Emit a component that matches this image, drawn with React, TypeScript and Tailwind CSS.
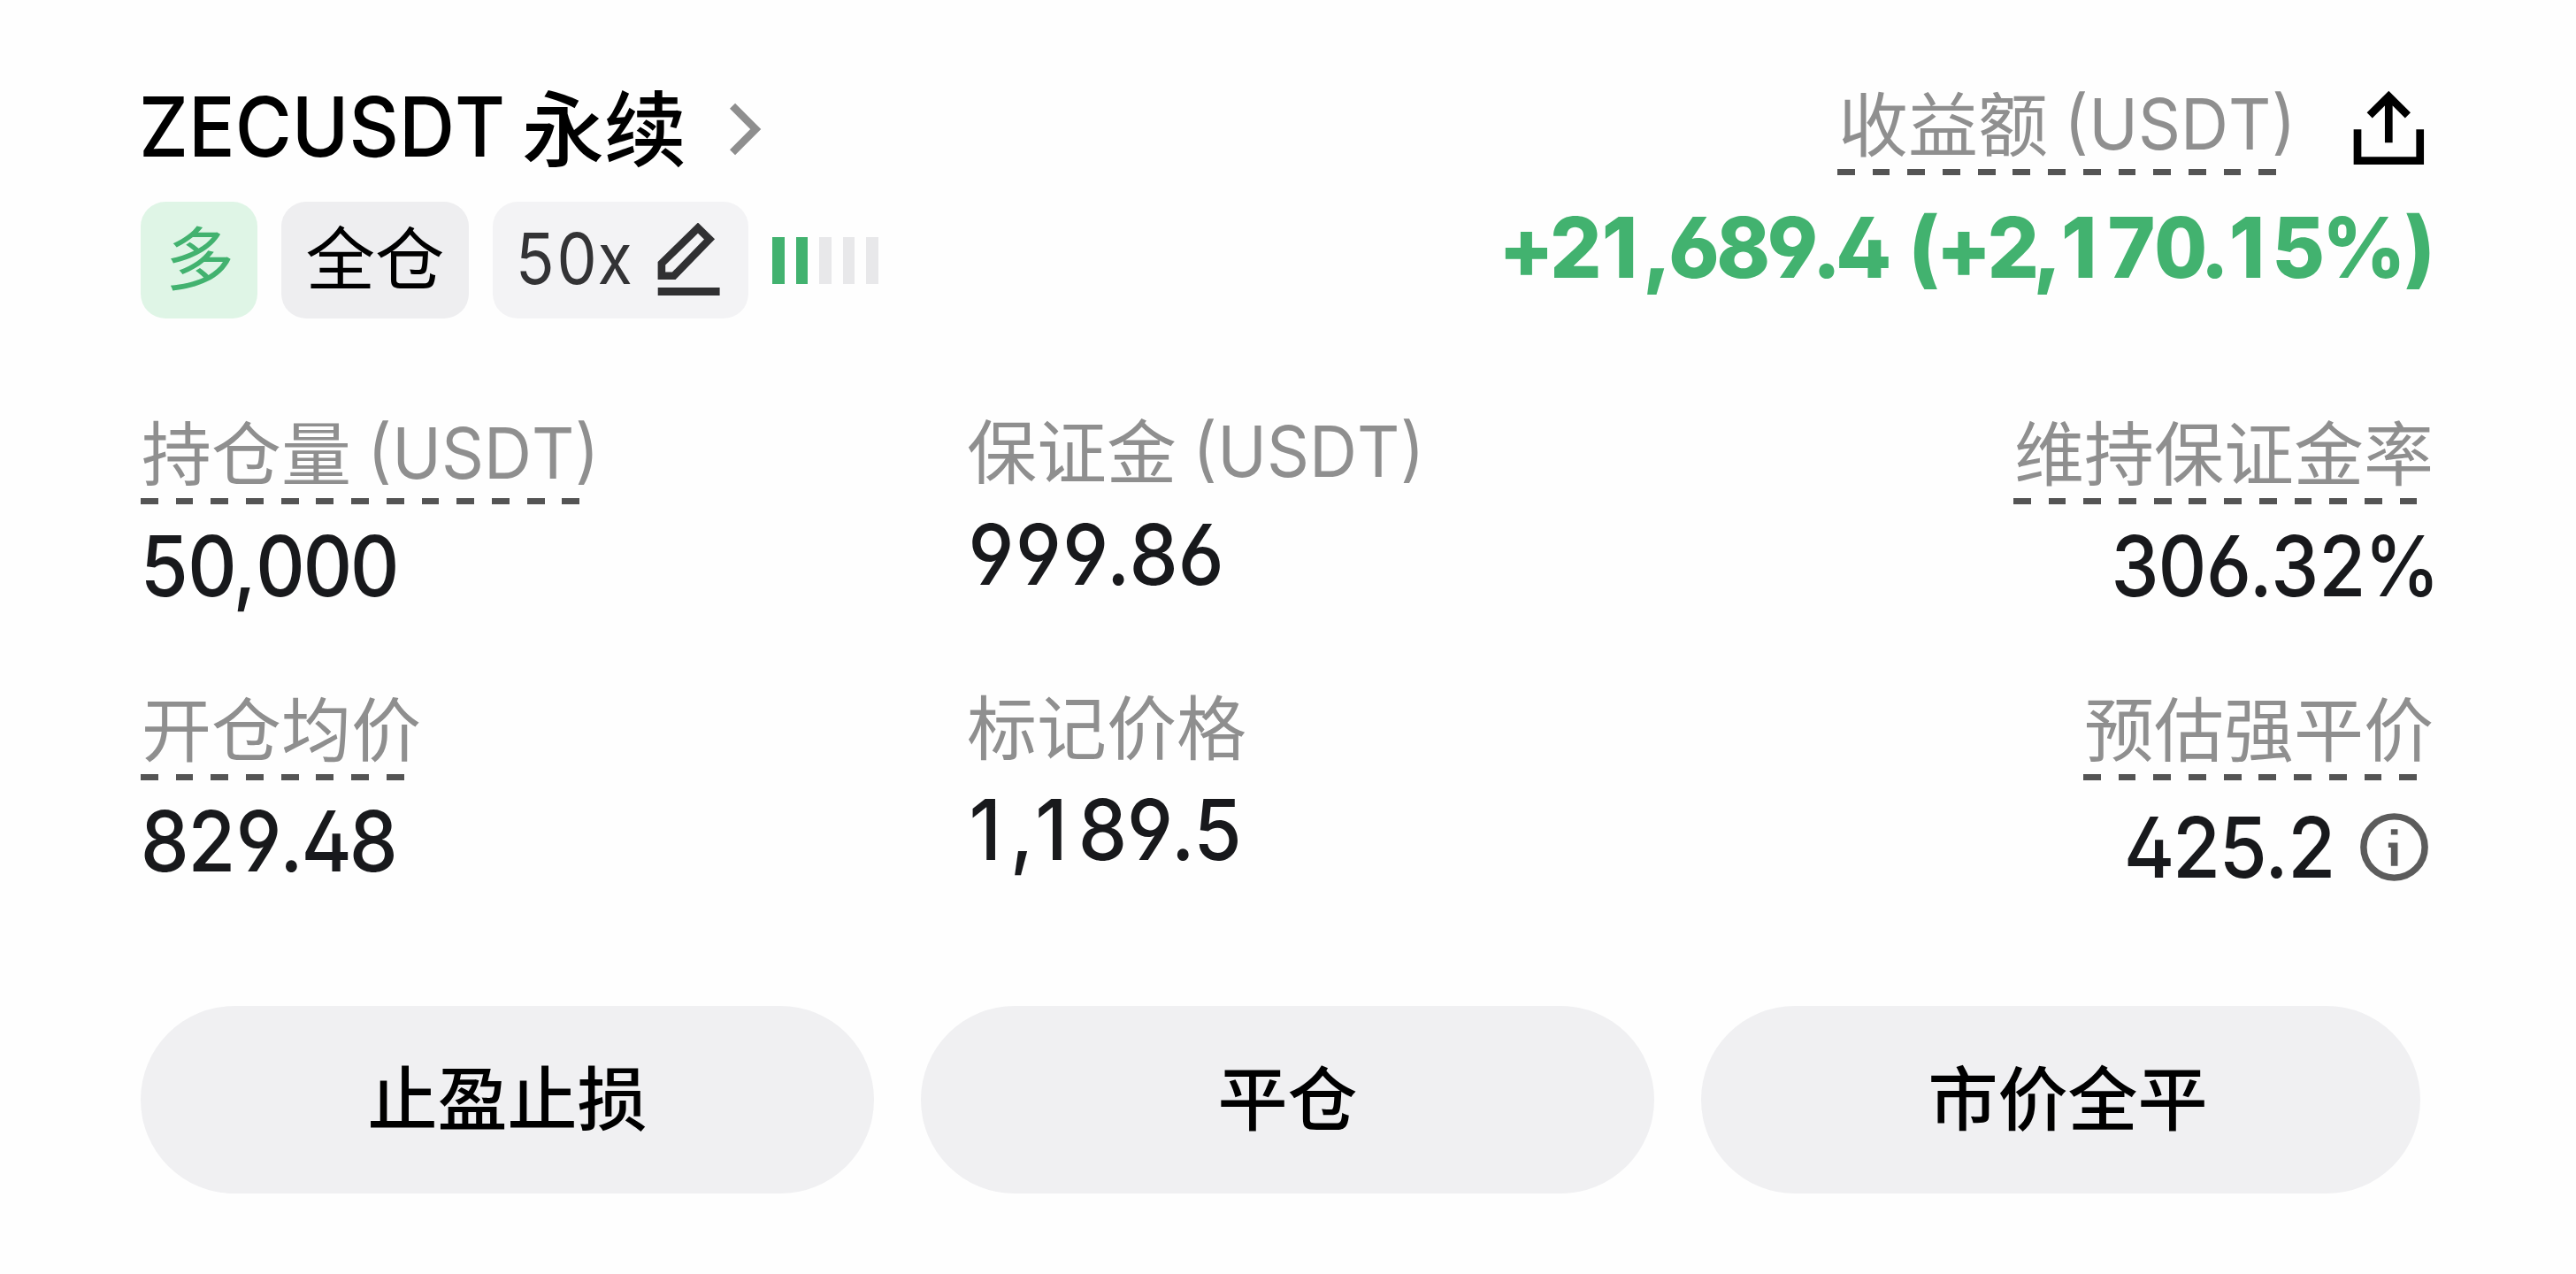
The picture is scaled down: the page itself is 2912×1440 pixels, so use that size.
import type { ReactNode } from "react";

const CJK = "font-['Noto_Sans_CJK_SC',sans-serif] leading-none whitespace-nowrap";
const NUM =
  "inline-block font-['Inter',sans-serif] leading-none whitespace-nowrap [font-feature-settings:'cv02','cv03','cv04','tnum'] [font-kerning:none]";

/* Tight tabular figures: flag-only digit one, untightened separators. */
function Figures({ text }: { text: string }) {
  return (
    <>
      {text.split(/([1.,])/).map((part, i) => {
        if (part === "1") {
          return (
            <span key={i} className="inline-block w-[0.58em] pl-[0.04em] [font-feature-settings:normal]">
              1
            </span>
          );
        }
        if (part === "." || part === ",") {
          return <span key={i} className="tracking-normal">{part}</span>;
        }
        return part;
      })}
    </>
  );
}

function Value({ text, className }: { text: string; className: string }) {
  return (
    <span className={`${NUM} text-[95px] font-[510] tracking-[-0.04em] text-[#18191c] ${className}`}>
      <Figures text={text} />
    </span>
  );
}

function Label({ text, unit, dashed = false }: { text: string; unit?: boolean; dashed?: boolean }) {
  return (
    <div className={unit ? "w-[516px]" : "w-fit"}>
      <div className="flex h-[79px] items-start text-[#8f8f8f]">
        <span className={`${CJK} -mr-px ml-px text-[79px]`}>{text}</span>
        {unit && (
          <span className={`${NUM} mt-[3px] ml-[18px] origin-left scale-x-[0.936] text-[80px]`}>(USDT)</span>
        )}
      </div>
      {dashed && (
        <div className="mt-[15px] h-[6.5px] bg-[repeating-linear-gradient(90deg,#545454_0_19.8px,transparent_19.8px_39.7px)]" />
      )}
    </div>
  );
}

function Badge({ className, children }: { className: string; children: ReactNode }) {
  return <div className={`flex h-[132px] rounded-[28px] ${className}`}>{children}</div>;
}

function Chevron() {
  return (
    <svg className="mt-[22px] ml-[49px] h-[60px] w-[36px]" viewBox="10 11 36 60" fill="none" stroke="#8e8e8e" strokeWidth="8.6">
      <path d="M13 14.7 39.2 41 13 67.3" />
    </svg>
  );
}

function Pencil() {
  return (
    <svg className="h-[83px] w-[71px] shrink-0" viewBox="8 12 71 83" fill="none" stroke="#303032">
      <path d="M12.9 71.8V57.8L54 17.6 67 30.4 26.8 71.8Z" strokeWidth="8.6" />
      <path d="M8.7 89.5H78.6" strokeWidth="9" />
    </svg>
  );
}

function Share() {
  return (
    <svg className="mr-[9px] h-[85px] w-[81px] shrink-0" viewBox="10 12 81 85" fill="none" stroke="#000" strokeWidth="8.7">
      <path d="M15 56.3V91.7H85.7V56.3M50.3 17V71.3M28.7 40.4 50.3 18.8 71.9 40.4" />
    </svg>
  );
}

function Info() {
  return (
    <svg className="mt-[9px] mr-[5px] ml-[29px] h-[77px] w-[77px] shrink-0" viewBox="13 14 77.4 77.4">
      <circle cx="51.7" cy="52.7" r="34.8" fill="none" stroke="#5c5c5c" strokeWidth="7.5" />
      <path d="M48 32.3h7.7v6.4H48zM45 47.7h10.7V74H48V53.3h-3z" fill="#5c5c5c" />
    </svg>
  );
}

function Action({ text, className }: { text: string; className: string }) {
  return (
    <button
      className={`${CJK} flex h-[212px] items-center justify-center rounded-full bg-[#f0f0f2] pb-[12px] text-[79px] font-medium text-black ${className}`}
    >
      {text}
    </button>
  );
}

export default function App() {
  return (
    <main className="h-[1440px] w-[2912px] overflow-hidden bg-[#fefefe] pt-[94px] pr-[162px] pl-[159px]">
      <header className="flex h-[266px] justify-between">
        <div>
          <div className="flex h-[92px] items-start">
            <span className={`${NUM} mt-[2px] -ml-[2px] w-[433px] origin-left scale-x-[0.93] text-[94px] font-[550] text-black`}>
              ZECUSDT
            </span>
            <span className={`${CJK} text-[93px] font-medium text-black`}>永续</span>
            <Chevron />
          </div>
          <div className="mt-[42px] flex items-center gap-[27px]">
            <Badge className="w-[132px] items-center justify-center bg-[#dff5e6] pb-[12px]">
              <span className={`${CJK} pl-[2px] text-[78px] text-[#42b26f]`}>多</span>
            </Badge>
            <Badge className="w-[212px] items-center justify-center bg-[#eeeef0] pb-[12px]">
              <span className={`${CJK} text-[78.5px] text-black`}>全仓</span>
            </Badge>
            <Badge className="w-[289px] items-start bg-[#f3f3f5] pt-[24px] pl-[25px]">
              <span className="w-[161px] shrink-0">
                <span className={`${NUM} block origin-left scale-x-[0.9] text-[80px] text-[#333335]`}>50x</span>
              </span>
              <Pencil />
            </Badge>
            <div className="flex gap-[13px]">
              <span className="h-[53px] w-[13.5px] bg-[#42b26f]" />
              <span className="h-[53px] w-[13.5px] bg-[#42b26f]" />
              <span className="h-[53px] w-[13.5px] bg-[#e8e8ea]" />
              <span className="h-[53px] w-[13.5px] bg-[#e8e8ea]" />
              <span className="h-[53px] w-[13.5px] bg-[#e8e8ea]" />
            </div>
          </div>
        </div>
        <div className="flex flex-col items-end">
          <div className="flex gap-[67px] pt-[3px]">
            <Label text="收益额" unit dashed />
            <div className="pt-[5px]">
              <Share />
            </div>
          </div>
          <span className={`${NUM} mt-[34px] mr-[2px] origin-right scale-x-[0.969] text-[95px] font-[760] tracking-[-0.04em] [word-spacing:4px] text-[#42b26f]`}>
            <Figures text="+21,689.4 (+2,170.15%)" />
          </span>
        </div>
      </header>

      <section className="mt-[107px] grid grid-cols-[933px_933px_725px] grid-rows-[312px_312px]">
        <div className="pt-[2px]">
          <Label text="持仓量" unit dashed />
          <div className="mt-[22px] -ml-px"><Value text="50,000" className="origin-left scale-x-[0.925]" /></div>
        </div>
        <div>
          <Label text="保证金" unit />
          <div className="mt-[33px]"><Value text="999.86" className="origin-left scale-x-[0.925]" /></div>
        </div>
        <div className="flex flex-col items-end pt-[2px]">
          <Label text="维持保证金率" dashed />
          <div className="mt-[22px] -mr-[5px]"><Value text="306.32%" className="origin-right scale-x-[0.91]" /></div>
        </div>
        <div className="pt-[2px]">
          <Label text="开仓均价" dashed />
          <div className="mt-[21px] -ml-px"><Value text="829.48" className="origin-left scale-x-[0.92]" /></div>
        </div>
        <div>
          <Label text="标记价格" />
          <div className="mt-[32px]"><Value text="1,189.5" className="origin-left scale-x-[0.928]" /></div>
        </div>
        <div className="flex flex-col items-end pt-[2px]">
          <Label text="预估强平价" dashed />
          <div className="mt-[28px] flex items-start">
            <Value text="425.2" className="origin-right scale-x-[0.925]" />
            <Info />
          </div>
        </div>
      </section>

      <footer className="mt-[46px] flex gap-[53px]">
        <Action text="止盈止损" className="w-[829px]" />
        <Action text="平仓" className="w-[829px]" />
        <Action text="市价全平" className="w-[813px] pl-[16px]" />
      </footer>
    </main>
  );
}
